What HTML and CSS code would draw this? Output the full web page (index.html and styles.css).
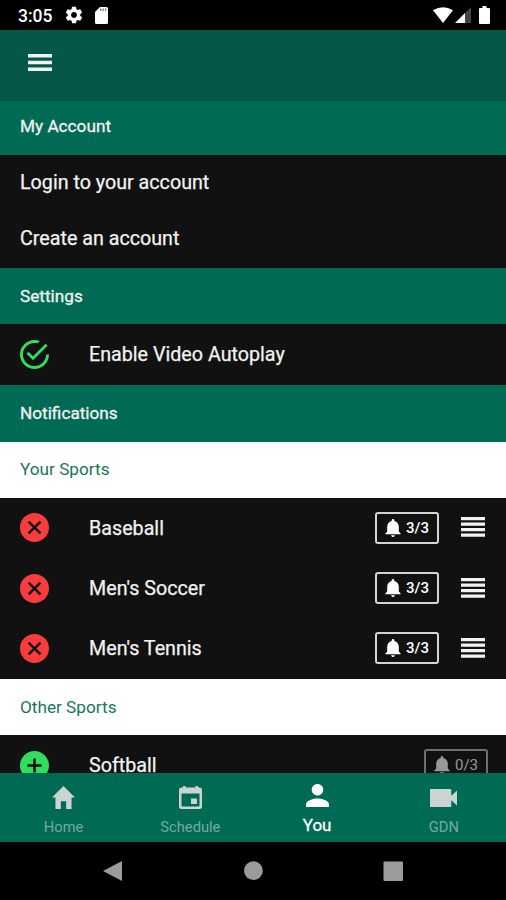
FILE: index.html
```html
<!DOCTYPE html>
<html lang="en">
<head>
<meta charset="utf-8">
<title>My Account</title>
<link rel="stylesheet" href="styles.css">
</head>
<body>
<svg class="defs" aria-hidden="true">
  <symbol id="remove" viewBox="48 48 416 416"><path d="M256 48C140.559 48 48 140.559 48 256c0 115.436 92.559 208 208 208 115.435 0 208-92.564 208-208 0-115.441-92.564-208-208-208zm98 280-26 26-72-72-72 72-26-26 72-72-72-72 26-26 72 72 72-72 26 26-72 72z"/></symbol>
  <symbol id="add" viewBox="48 48 416 416"><path d="M256 48C141.125 48 48 141.125 48 256s93.125 208 208 208 208-93.125 208-208S370.875 48 256 48zm102 226h-84v84h-36v-84h-84v-36h84v-84h36v84h84z"/></symbol>
  <symbol id="bell" viewBox="48 48 416 416"><path d="M256 464c22.779 0 41.411-18.719 41.411-41.6h-82.823c0 22.881 18.633 41.6 41.412 41.6zm134.589-124.8V224.8c0-63.44-44.516-117.518-103.53-131.041V79.2c0-17.682-13.457-31.2-31.059-31.2s-31.059 13.518-31.059 31.2v14.559c-59.015 13.523-103.53 67.601-103.53 131.041v114.4L80 380.8v20.8h352v-20.8l-41.411-41.6z"/></symbol>
  <symbol id="reorder" viewBox="0 0 24 20"><path d="M0 0h24v3.2H0zM0 5.5h24v3.2H0zM0 11h24v3.2H0zM0 16.5h24v3.2H0z"/></symbol>
</svg>
<div class="screen">
  <div class="status">
    <span class="time">3:05</span>
    <svg class="gear" viewBox="0 0 24 24"><path d="M19.43 12.98c.04-.32.07-.64.07-.98s-.03-.66-.07-.98l2.11-1.65c.19-.15.24-.42.12-.64l-2-3.46c-.12-.22-.39-.3-.61-.22l-2.49 1c-.52-.4-1.08-.73-1.69-.98l-.38-2.65C14.46 2.18 14.25 2 14 2h-4c-.25 0-.46.18-.49.42l-.38 2.65c-.61.25-1.17.59-1.69.98l-2.49-1c-.23-.09-.49 0-.61.22l-2 3.46c-.13.22-.07.49.12.64l2.11 1.65c-.04.32-.07.65-.07.98s.03.66.07.98l-2.11 1.65c-.19.15-.24.42-.12.64l2 3.46c.12.22.39.3.61.22l2.49-1c.52.4 1.08.73 1.69.98l.38 2.65c.03.24.24.42.49.42h4c.25 0 .46-.18.49-.42l.38-2.65c.61-.25 1.17-.59 1.69-.98l2.49 1c.23.09.49 0 .61-.22l2-3.46c.12-.22.07-.49-.12-.64l-2.11-1.65zM12 15.5c-1.93 0-3.5-1.57-3.5-3.5s1.57-3.5 3.5-3.5 3.5 1.57 3.5 3.5-1.57 3.5-3.5 3.5z"/></svg>
    <svg class="sd" viewBox="0 0 13 17"><path d="M5 0h6.500Q13 0 13 1.500v14Q13 17 11.500 17h-10Q0 17 0 15.500V5z"/><path class="slots" d="M5 1.500h1.300v2.500H5zM7.500 1.500h1.300v2.500H7.500zM10 1.500h1.300v2.500H10z"/></svg>
    <span class="grow"></span>
    <svg class="wifi" viewBox="0 0 20 16"><path d="M0 3.300Q10-3 20 3.300L10 16z"/></svg>
    <svg class="signal" viewBox="0 0 16 16"><path class="dim" d="M16 0v16h-6V6z"/><path d="M10 6v10H0z"/></svg>
    <svg class="battery" viewBox="0 0 11 18"><path d="M3.500 0h4v2H10q1 0 1 1v14q0 1-1 1H1q-1 0-1-1V3q0-1 1-1h2.500z"/></svg>
  </div>
  <div class="appbar"><svg class="menu" viewBox="0 0 24 17"><path d="M0 0h24v3.500H0zM0 6.700h24v3.500H0zM0 13.400h24v3.500H0z"/></svg></div>
  <main class="content">
    <h2 class="section first">My Account</h2>
    <div class="link login">Login to your account</div>
    <div class="link create">Create an account</div>
    <h2 class="section">Settings</h2>
    <div class="row toggle">
      <svg class="mark on" viewBox="48 48 416 416"><path d="M170.718 216.482L141.6 245.6l93.6 93.6 208-208-29.118-29.118L235.2 279.918l-64.482-63.436zM422.4 256c0 91.518-74.883 166.4-166.4 166.4S89.6 347.518 89.6 256 164.482 89.6 256 89.6c15.6 0 31.2 2.082 45.764 6.241L334 62.6C310.161 53.3 283.1 48 256 48 141.6 48 48 141.6 48 256s93.6 208 208 208 208-93.6 208-208h-41.6z"/></svg>
      <span class="name">Enable Video Autoplay</span>
    </div>
    <h2 class="section notifications">Notifications</h2>
    <h3 class="group your">Your Sports</h3>
    <div class="row"><svg class="mark off"><use href="#remove"/></svg><span class="name">Baseball</span><span class="badge"><svg class="bell"><use href="#bell"/></svg>3/3</span><svg class="drag"><use href="#reorder"/></svg></div>
    <div class="row"><svg class="mark off"><use href="#remove"/></svg><span class="name">Men's Soccer</span><span class="badge"><svg class="bell"><use href="#bell"/></svg>3/3</span><svg class="drag"><use href="#reorder"/></svg></div>
    <div class="row"><svg class="mark off"><use href="#remove"/></svg><span class="name">Men's Tennis</span><span class="badge"><svg class="bell"><use href="#bell"/></svg>3/3</span><svg class="drag"><use href="#reorder"/></svg></div>
    <h3 class="group">Other Sports</h3>
    <div class="row other"><svg class="mark on"><use href="#add"/></svg><span class="name">Softball</span><span class="badge muted"><svg class="bell"><use href="#bell"/></svg>0/3</span></div>
  </main>
  <nav class="tabs">
    <div class="tab"><svg class="home" viewBox="48 64 416 384" preserveAspectRatio="none"><path d="M208 448V320h96v128h97.600V256H464L256 64 48 256h62.400v192z"/></svg><span>Home</span></div>
    <div class="tab"><svg class="calendar" viewBox="0 0 23 23"><path fill-rule="evenodd" d="M4 0h2.500v1.500h10V0H19v1.500h1.500Q23 1.500 23 4v16.500q0 2.500-2.500 2.500h-18Q0 23 0 20.500V4q0-2.500 2.500-2.500H4zM2.500 7.500v12q0 1 1 1h16q1 0 1-1v-12zM12 12.500h6v5.500h-6z"/></svg><span>Schedule</span></div>
    <div class="tab active"><svg class="person" viewBox="64 64 384 384"><path d="M256 256c52.805 0 96-43.201 96-96s-43.195-96-96-96-96 43.201-96 96 43.195 96 96 96zm0 48c-63.598 0-192 32.402-192 96v48h384v-48c0-63.598-128.402-96-192-96z"/></svg><span>You</span></div>
    <div class="tab"><svg class="camera" viewBox="64 128 384 256"><path d="M366 224v-80c0-8.800-7.200-16-16-16H80c-8.800 0-16 7.200-16 16v224c0 8.800 7.200 16 16 16h270c8.800 0 16-7.200 16-16v-80l82 74V150l-82 74z"/></svg><span>GDN</span></div>
  </nav>
  <div class="system">
    <svg viewBox="0 0 20 22"><path d="M19 1v20L0 11z"/></svg>
    <svg viewBox="0 0 20 22"><circle cx="10.400" cy="10.700" r="9.400"/></svg>
    <svg viewBox="0 0 20 22"><rect x="0.500" y="1.500" width="19.500" height="19.500" rx="1"/></svg>
  </div>
</div>
</body>
</html>
```
FILE: styles.css
```css
* { box-sizing: border-box; }
body { margin: 0; background: #000; font-family: Roboto, sans-serif; color: #f2f2f2; }
svg { display: block; flex: none; fill: currentColor; }
.defs { display: none; }
.screen { width: 506px; height: 900px; display: flex; flex-direction: column; overflow: hidden; }

.status { height: 30px; flex: none; display: flex; align-items: center; padding: 1px 16.5px 1px 18px; color: #fff; }
.time { width: 46px; font-size: 17.5px; font-weight: 500; padding-top: 1px; }
.gear { width: 20px; height: 20px; }
.sd { width: 13px; height: 17px; margin-left: 11px; }
.slots { fill: #777; }
.grow { flex: 1; }
.wifi { width: 20px; height: 16px; margin: 0 2px 1px 0; }
.signal { width: 16px; height: 16px; margin-right: 7.5px; }
.dim { fill: #444; }
.battery { width: 11px; height: 18px; }

.appbar { height: 71px; flex: none; background: #055848; padding: 24px 28px; }
.menu { width: 24px; height: 17px; }

.content { height: 672px; flex: none; overflow: hidden; background: #111; }
.section, .group { margin: 0; height: 56px; padding: 0 20px; font-size: 17.2px; line-height: 56px; }
.section { background: #006b54; font-weight: 400; -webkit-text-stroke: 0.3px currentColor; }
.section.first { height: 54px; line-height: 51px; }
.section.notifications { height: 57px; }
.group { background: #fff; color: #1b7559; font-weight: 400; }
.your { line-height: 55px; }
.link { height: 56px; padding-left: 20px; font-size: 19.7px; line-height: 55px; -webkit-text-stroke: 0.25px currentColor; }
.create { height: 57px; line-height: 55px; }
.row { height: 60.4px; display: flex; align-items: center; padding: 0 21px 1px 20px; }
.toggle { height: 61px; }
.mark { width: 29px; height: 29px; margin-right: 40px; }
.on { color: #32dc5c; }
.off { color: #fa3c3c; }
.name { flex: 1; padding-top: 2px; font-size: 19.7px; line-height: 30px; -webkit-text-stroke: 0.25px currentColor; }
.badge { width: 64px; height: 32px; display: flex; align-items: center; padding-left: 6.5px; gap: 4.5px; border: 2px solid #d4d4d4; border-radius: 3px; font-size: 15px; font-weight: 500; color: #fff; }
.bell { width: 18px; height: 18px; }
.drag { width: 24px; height: 20px; margin: 0 0 1px 22px; }
.other { padding-right: 18px; padding-bottom: 0; }
.muted { color: #999; border-color: #707070; font-weight: 400; }

.tabs { height: 69px; flex: none; display: grid; grid-template-columns: repeat(4, 126.75px); background: #006b54; color: #ccd4d3; }
.tab { display: flex; flex-direction: column; align-items: center; padding: 13px 0 0 0.5px; font-size: 14.7px; }
.tab span { margin-top: auto; height: 24px; line-height: 18px; color: #75a99e; }
.home { width: 23px; height: 23px; }
.calendar { width: 23px; height: 23px; }
.camera { width: 27px; height: 18px; margin-top: 3px; }
.person { width: 23px; height: 23px; }
.active { padding-top: 11px; color: #fff; font-size: 17px; font-weight: 400; -webkit-text-stroke: 0.3px currentColor; }
.tab.active span { color: #fff; height: 26px; line-height: 18px; }
.system { height: 58px; flex: none; display: flex; justify-content: space-between; padding: 18px 103px 0; color: #9b9b9b; }
.system svg { width: 20px; height: 22px; }
```
